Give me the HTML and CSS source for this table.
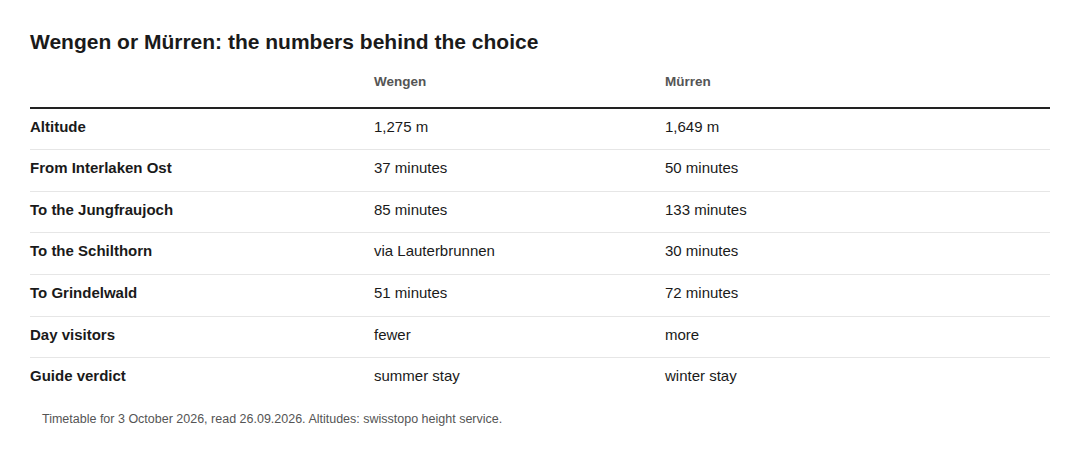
FILE: index.html
```html
<!DOCTYPE html>
<html lang="en">
<head>
<meta charset="utf-8">
<title>Wengen or Mürren</title>
<link rel="stylesheet" href="styles.css">
</head>
<body>
<main class="page">
  <h1 class="title">Wengen or Mürren: the numbers behind the choice</h1>
  <table class="compare">
    <thead>
      <tr>
        <th class="corner"></th>
        <th class="col">Wengen</th>
        <th class="col">Mürren</th>
      </tr>
    </thead>
    <tbody>
      <tr><th>Altitude</th><td>1,275 m</td><td>1,649 m</td></tr>
      <tr><th>From Interlaken Ost</th><td>37 minutes</td><td>50 minutes</td></tr>
      <tr><th>To the Jungfraujoch</th><td>85 minutes</td><td>133 minutes</td></tr>
      <tr><th>To the Schilthorn</th><td>via Lauterbrunnen</td><td>30 minutes</td></tr>
      <tr><th>To Grindelwald</th><td>51 minutes</td><td>72 minutes</td></tr>
      <tr><th>Day visitors</th><td>fewer</td><td>more</td></tr>
      <tr><th>Guide verdict</th><td>summer stay</td><td>winter stay</td></tr>
    </tbody>
  </table>
  <p class="note">Timetable for 3 October 2026, read 26.09.2026. Altitudes: swisstopo height service.</p>
</main>
</body>
</html>
```
FILE: styles.css
```css
html, body {
  margin: 0;
  padding: 0;
  background: #ffffff;
}
body {
  font-family: "Liberation Sans", Arial, sans-serif;
  color: #1a1a1a;
}
.page {
  padding: 30px 30px 0 30px;
}
.title {
  margin: 0;
  font-size: 21px;
  line-height: 24px;
  font-weight: 700;
  color: #1a1a1a;
}
.compare {
  width: 1020px;
  margin-top: 20px;
  border-collapse: collapse;
  table-layout: fixed;
  font-size: 15px;
}
.compare th, .compare td {
  text-align: left;
  padding: 10px 0 14px 0;
  line-height: 16.6px;
  vertical-align: top;
}
.compare thead th {
  font-size: 13.5px;
  font-weight: 700;
  color: #555555;
  padding: 0 0 16px 0;
  border-bottom: 2px solid #222222;
}
.compare .corner { width: 344px; }
.compare thead .col:nth-child(2) { width: 291px; }
.compare tbody th {
  font-weight: 700;
  color: #1a1a1a;
}
.compare tbody td {
  color: #1a1a1a;
}
.compare tbody tr + tr th,
.compare tbody tr + tr td {
  border-top: 1px solid #e6e6e6;
}
.note {
  margin: 13px 0 0 12px;
  font-size: 12.5px;
  line-height: 15px;
  color: #555555;
}
```
